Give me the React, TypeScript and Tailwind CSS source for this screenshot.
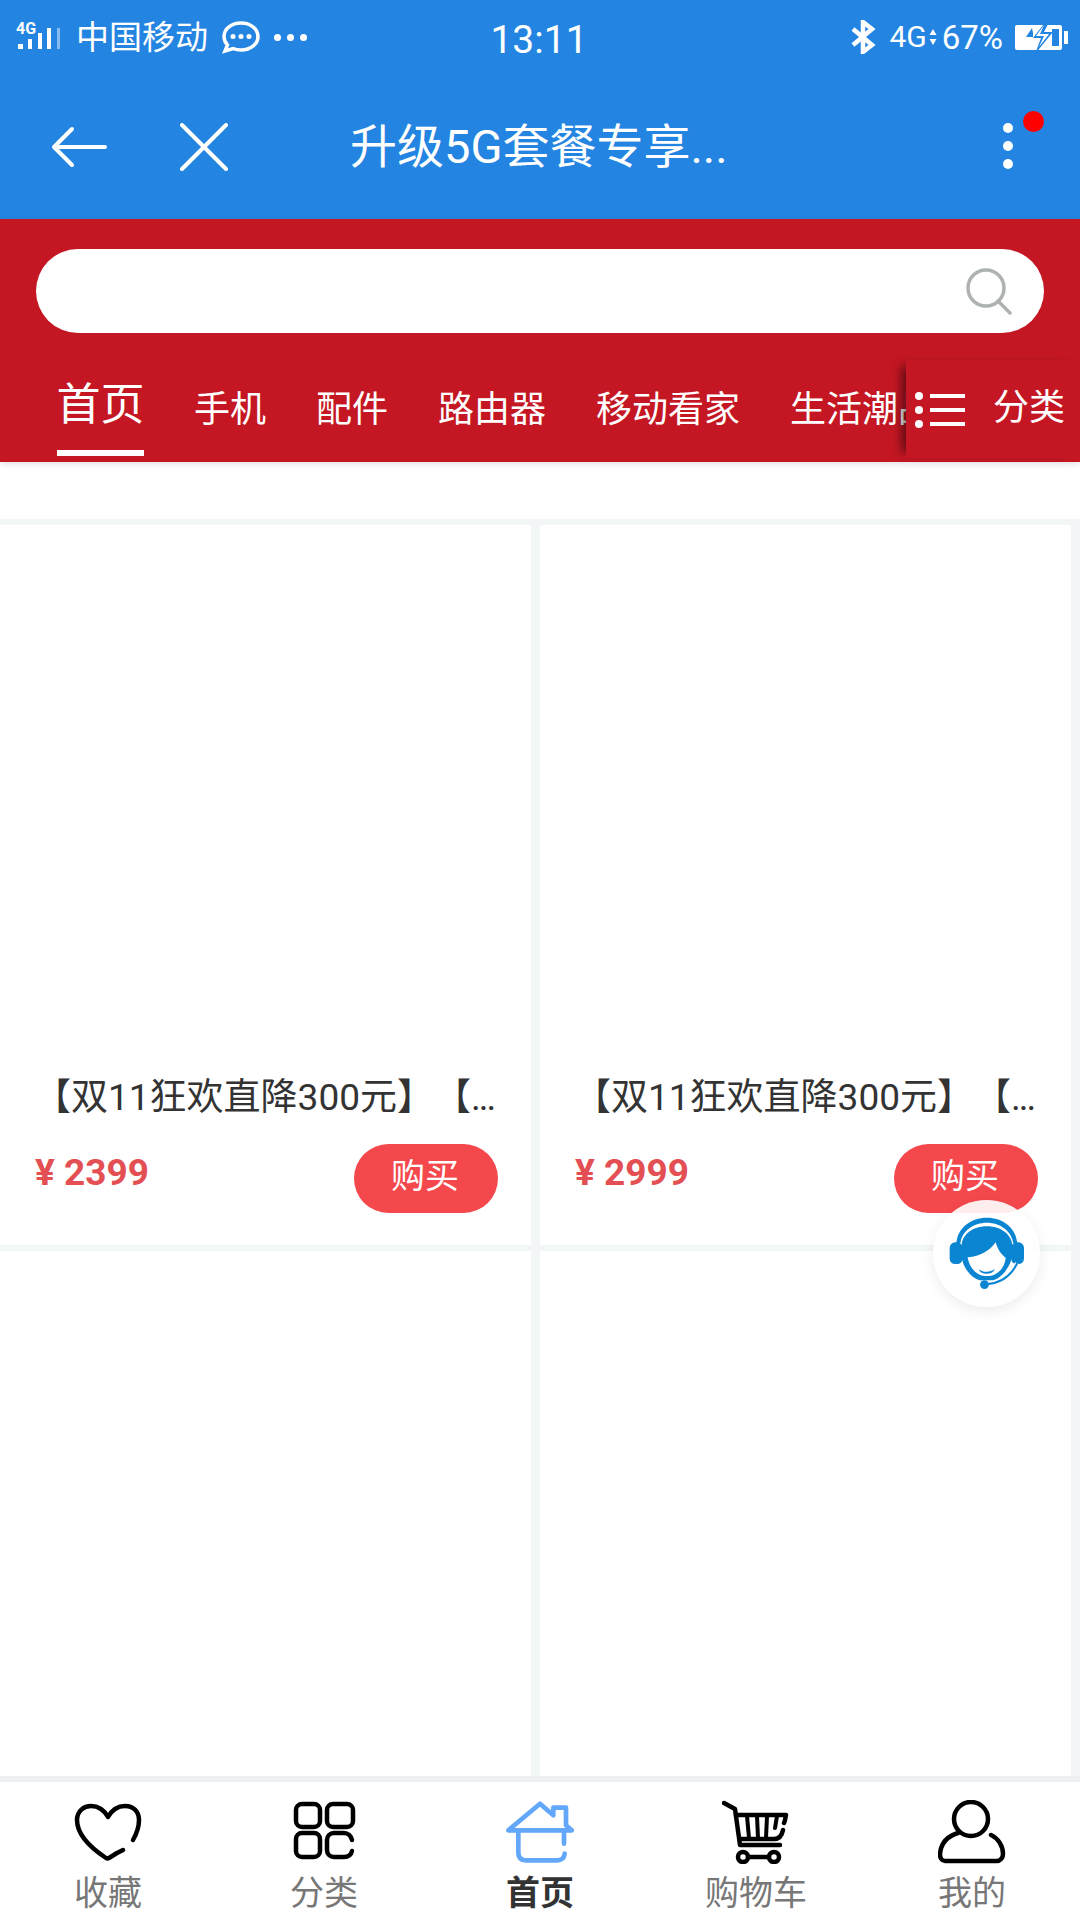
// 5G plan shop page inside the app webview: blue status/title bars, red search + tabs, product grid, bottom nav.
const CJK = "font-['Roboto','Noto_Sans_CJK_SC',sans-serif]";

const tabs = ['手机', '配件', '路由器', '移动看家', '生活潮品'];

function StatusBar() {
  return (
    <div className="flex h-[74px] items-center pl-[16px] pr-[12px] text-white">
      <svg width="46" height="34" viewBox="0 0 46 34" className="mr-[14px] shrink-0" fill="#fff">
        <text x="0" y="14" fontSize="16" fontWeight="700" fontFamily="Roboto, sans-serif">4G</text>
        <rect x="2" y="24" width="5" height="5" />
        <rect x="12" y="19" width="4" height="10" />
        <rect x="22" y="13" width="4" height="16" />
        <rect x="31" y="8" width="4" height="21" />
        <rect x="41" y="8" width="3" height="21" opacity="0.45" />
      </svg>
      <span className="text-[33px] leading-none">中国移动</span>
      <svg width="40" height="34" viewBox="0 0 40 34" className="ml-[13px]" fill="none" stroke="#fff" strokeWidth="3.500">
        <path d="M20 3c9.500 0 17 5.800 17 13.500S29.500 30 20 30c-3 0-5.500-.5-8-1.500L4 31l2.500-6C4 22.500 3 19.500 3 16.500 3 8.800 10.500 3 20 3z" />
        <circle cx="12" cy="16.500" r="2.500" fill="#fff" stroke="none" />
        <circle cx="20" cy="16.500" r="2.500" fill="#fff" stroke="none" />
        <circle cx="28" cy="16.500" r="2.500" fill="#fff" stroke="none" />
      </svg>
      <div className="ml-[13px] flex gap-[6px]">
        <span className="h-[7px] w-[7px] rounded-full bg-white" />
        <span className="h-[7px] w-[7px] rounded-full bg-white" />
        <span className="h-[7px] w-[7px] rounded-full bg-white" />
      </div>
      <span className="ml-[182px] mt-[6px] w-[100px] text-center text-[39px] leading-none">13:11</span>
      <div className="ml-auto flex items-center">
        <svg width="26" height="34" viewBox="0 0 26 34" fill="none" stroke="#fff" strokeWidth="4.500">
          <path d="M3 9l19 16-9 7V2l9 7L3 25" />
        </svg>
        <span className="ml-[13px] text-[30px] leading-none">4G</span>
        <svg width="8" height="18" viewBox="0 0 8 18" className="ml-[2px]" fill="#fff">
          <path d="M4 1l3.500 6h-7zM4 17L.5 11h7z" />
        </svg>
        <span className="ml-[5px] text-[33px] leading-none">67%</span>
        <svg width="54" height="34" viewBox="0 0 54 34" className="ml-[12px] mr-[-1px]">
          <rect x="0" y="5" width="47" height="25" rx="2" fill="#fff" />
          <rect x="37" y="9" width="7" height="17" fill="#2385e1" />
          <rect x="49" y="11" width="4" height="13" fill="#fff" />
          <path d="M22 5h-7l-8 15h7v10h7z" fill="#fff" />
          <path d="M17 8l-6 9h7v-4z" fill="#2385e1" />
          <path d="M32 0L18 18h8l-6 16 18-22h-9l6-12z" fill="#2385e1" />
          <path d="M29 5L21 16h8l-5 11 10-13h-9l4-9z" fill="#fff" />
        </svg>
      </div>
    </div>
  );
}

function TitleBar() {
  return (
    <div className="relative flex h-[145px] items-start pt-[46px] text-white">
      <svg width="56" height="42" viewBox="0 0 56 42" className="ml-[51px] mt-[6px]" fill="none" stroke="#fff" strokeWidth="4" strokeLinecap="round" strokeLinejoin="round">
        <path d="M54 21H3M21 3L3 21l18 18" />
      </svg>
      <svg width="48" height="48" viewBox="0 0 48 48" className="ml-[73px] mt-[3px]" fill="none" stroke="#fff" strokeWidth="4" strokeLinecap="round">
        <path d="M2 2l44 44M46 2L2 46" />
      </svg>
      <span className="ml-[122px] text-[47px] leading-[54px]">升级5G套餐专享...</span>
      <div className="ml-auto mr-[67px] mt-[3px] flex flex-col gap-[8px]">
        <span className="h-[10px] w-[10px] rounded-full bg-white" />
        <span className="h-[10px] w-[10px] rounded-full bg-white" />
        <span className="h-[10px] w-[10px] rounded-full bg-white" />
      </div>
      <span className="absolute left-[1023px] top-[37px] h-[21px] w-[21px] rounded-full bg-[#ff0000]" />
    </div>
  );
}

function RedHeader() {
  return (
    <div className="relative z-10 h-[243px] bg-[#c41723] shadow-[0_2px_6px_rgba(0,0,0,0.12)]">
      <div className="px-[36px] pt-[30px]">
        <div className="flex h-[84px] items-center justify-end rounded-full bg-white pr-[31px]">
          <svg width="48" height="48" viewBox="0 0 48 48" fill="none" stroke="#aeb2b3" strokeWidth="3.500">
            <circle cx="21" cy="21" r="18" />
            <path d="M33 34l12 12" strokeLinecap="round" />
          </svg>
        </div>
      </div>
      <div className="flex items-end overflow-hidden whitespace-nowrap pl-[57px] pt-[44px] text-white">
        <div className="flex w-[87px] flex-col items-center">
          <span className="text-[44px] leading-[56px]">首页</span>
          <span className="mt-[17px] h-[6px] w-full bg-white" />
        </div>
        {tabs.map((t) => (
          <span key={t} className="mb-[24px] ml-[50px] text-[36px] leading-[44px]">{t}</span>
        ))}
      </div>
      <div className="absolute right-0 top-[141px] flex h-[98px] w-[174px] items-center bg-[#c41723] text-white shadow-[-10px_0_10px_-6px_rgba(0,0,0,0.55)]">
        <svg width="50" height="38" viewBox="0 0 50 38" className="ml-[9px] mt-[4px]" fill="#fff">
          <circle cx="4" cy="4" r="4" />
          <circle cx="4" cy="18" r="4" />
          <circle cx="4" cy="32" r="4" />
          <rect x="15" y="2" width="35" height="4" />
          <rect x="15" y="16" width="35" height="4" />
          <rect x="15" y="30" width="35" height="4" />
        </svg>
        <span className="mb-[2px] ml-[28px] text-[36px] leading-none">分类</span>
      </div>
    </div>
  );
}

function ProductCard({ price }: { price?: string }) {
  if (!price) return <div className="h-[525px] bg-white" />;
  return (
    <div className="flex h-[720px] flex-col bg-white pl-[34px] pr-[33px] pt-[550px]">
      {/* space-all: chrome otherwise squeezes the two brackets together */}
      <div className="whitespace-nowrap text-[37px] leading-[46px] text-[#333] [text-spacing-trim:space-all]">
        【双11狂欢直降300元】【<span className="tracking-[-2px]">...</span>
      </div>
      <div className="ml-px mt-[23px] flex items-start justify-between">
        <span className="mt-[7px] text-[37px] font-bold leading-[44px] text-[#e34f52]">¥ {price}</span>
        <span className="flex h-[69px] w-[144px] items-center justify-center rounded-full bg-[#f4484c] pb-[5px] pr-[2px] text-[34px] text-white">购买</span>
      </div>
    </div>
  );
}

function Headset() {
  return (
    <svg width="76" height="76" viewBox="60 50 225 225">
      <g fill="#0a85d1">
        <path d="M82 130C85 85 125 55 172 55c48 0 86 30 90 75h-12c-5-35-38-60-78-60s-74 25-78 60z" />
        <rect x="62" y="128" width="38" height="64" rx="16" />
        <rect x="244" y="128" width="38" height="64" rx="16" />
        <path d="M97 140c0-35 33-60 75-60 43 0 74 25 76 60v25c-5 35-33 70-58 75h-40c-25-8-48-35-53-70z" />
      </g>
      <path d="M115 172c20 0 60-10 83-44 7 22 17 37 30 46-3 28-23 54-56 54-32 0-52-26-57-56z" fill="#fff" />
      <path d="M148 208c12 10 34 10 48-2-6 20-41 20-48 2z" fill="#0a85d1" />
      <path d="M170 252c35-2 70-17 92-62" fill="none" stroke="#fff" strokeWidth="14" />
      <path d="M170 252c35-2 70-17 92-62" fill="none" stroke="#0a85d1" strokeWidth="6" />
      <circle cx="165" cy="253" r="13" fill="#0a85d1" />
    </svg>
  );
}

const navIcon = 'h-[64px] w-[68px]';

function NavIcon({ name }: { name: string }) {
  if (name === '收藏')
    return (
      <svg viewBox="0 0 68 64" className={navIcon} fill="none" stroke="#000" strokeWidth="4.500" strokeLinecap="round" strokeLinejoin="round">
        <path d="M49 50l-6 3-8 5c-1 .5-2 .5-3 0C20 50 3 37 3 20 3 11 10 6 17 6c7 0 13 4 17 11 4-7 10-11 17-11 8 0 14 5 14 14 0 7-2 13-6 20" />
      </svg>
    );
  if (name === '分类')
    return (
      <svg viewBox="0 0 68 64" className={navIcon} fill="none" stroke="#000" strokeWidth="4.500" strokeLinecap="round">
        <rect x="6" y="4" width="24" height="23" rx="6" />
        <rect x="37" y="4" width="26" height="23" rx="6" />
        <rect x="6" y="33" width="24" height="24" rx="6" />
        <path d="M62 40c-1-4-4-7-8-7H44c-4 0-7 3-7 7v10c0 4 3 7 7 7h10c4 0 7-2 8-6" />
      </svg>
    );
  if (name === '首页')
    return (
      <svg viewBox="45 25 210 190" className="h-[64px] w-[70px]" fill="none" stroke="#62a7fa" strokeWidth="14" strokeLinecap="round" strokeLinejoin="round">
        <path d="M55 115L150 35l40 35V47h38v53l17 15z" />
        <path d="M85 115v65c0 16 8 25 24 25h92c14 0 22-8 23-20M222 115v40" />
      </svg>
    );
  if (name === '购物车')
    return (
      <svg viewBox="0 0 68 64" className={navIcon} fill="none" stroke="#000" strokeWidth="4.500" strokeLinecap="round" strokeLinejoin="round">
        <path d="M2 3l11 6 5 36h40" />
        <path d="M14 15h50c0 0-1 6-2 8" />
        <path d="M25 16l2 22M35 16l1 22M45 16l-1 22M55 16l-2 12" strokeWidth="4" />
        <path d="M18 39l34 0c6 0 8-4 9-9" />
        <circle cx="21" cy="57" r="5" />
        <circle cx="52" cy="57" r="5" />
        <path d="M26 57h21" />
      </svg>
    );
  return (
    <svg viewBox="0 0 68 64" className={navIcon} fill="none" stroke="#000" strokeWidth="4.500" strokeLinecap="round" strokeLinejoin="round">
      <circle cx="33" cy="19" r="17" />
      <path d="M20 33C10 36 3 42 2 54c0 4 2 7 5 7h52c3 0 6-3 6-7 0-8-5-16-12-19" />
    </svg>
  );
}

const navItems = ['收藏', '分类', '首页', '购物车', '我的'];

function BottomNav() {
  return (
    <div className="grid h-[138px] grid-cols-5 bg-white">
      {navItems.map((n) => (
        <div key={n} className="flex flex-col items-center">
          <div className="flex h-[91px] items-end pb-[9px]">
            <NavIcon name={n} />
          </div>
          <span className={n === '首页' ? 'text-[34px] font-bold leading-[40px] text-[#333]' : 'text-[34px] leading-[40px] text-[#777]'}>{n}</span>
        </div>
      ))}
    </div>
  );
}

export default function App() {
  return (
    <div className={`relative h-[1920px] w-[1080px] overflow-hidden bg-[#f3f6f6] ${CJK}`}>
      <div className="bg-[#2385e1]">
        <StatusBar />
        <TitleBar />
      </div>
      <RedHeader />
      <div className="h-[57px] bg-white" />
      <div className="grid grid-cols-[531px_531px] gap-x-[9px] gap-y-[6px] pt-[6px]">
        <ProductCard price="2399" />
        <ProductCard price="2999" />
        <ProductCard />
        <ProductCard />
      </div>
      <div className="h-[6px] bg-[#eef0f1]" />
      <BottomNav />
      <div className="absolute left-[933px] top-[1200px] flex h-[107px] w-[107px] items-center justify-center rounded-full bg-white/90 shadow-[0_4px_14px_rgba(0,0,0,0.08)]">
        <Headset />
      </div>
    </div>
  );
}
